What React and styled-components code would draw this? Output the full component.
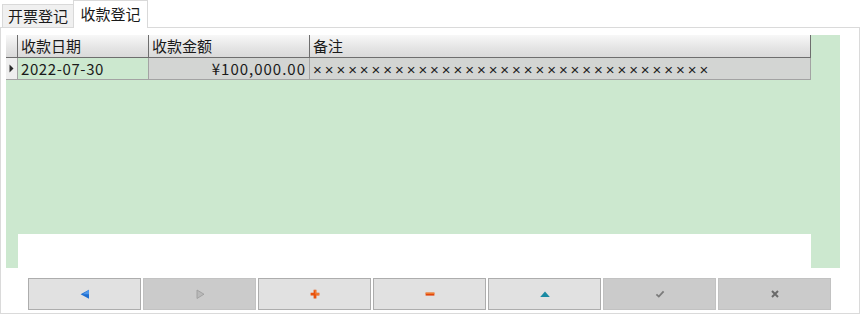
import React from 'react';
import styled, { createGlobalStyle } from 'styled-components';

const Global = createGlobalStyle`
  html, body { margin: 0; padding: 0; background: #ffffff; }
  body { font-family: "Noto Sans CJK SC", "Noto Sans", sans-serif; color: #1a1a1a; }
  * { box-sizing: border-box; }
`;

const Page = styled.div`
  width: 861px;
  height: 315px;
  display: flex;
  flex-direction: column;
  overflow: hidden;
`;

const TabStrip = styled.div`
  display: flex;
  align-items: flex-end;
  height: 27px;
  padding-left: 2px;
  position: relative;
  z-index: 1;
`;

const Tab = styled.div`
  display: flex;
  align-items: center;
  justify-content: center;
  width: ${p => (p.$active ? '75px' : '71px')};
  height: ${p => (p.$active ? '28px' : '23px')};
  margin-bottom: ${p => (p.$active ? '-1px' : '0')};
  padding-bottom: ${p => (p.$active ? '2px' : '0')};
  background: ${p => (p.$active ? '#ffffff' : '#f0f0f0')};
  border: 1px solid #d9d9d9;
  border-bottom: ${p => (p.$active ? 'none' : '0')};
  border-right: ${p => (p.$active ? '1px solid #d9d9d9' : '0')};
  font-size: 15px;
  line-height: 20px;
  color: #1a1a1a;
`;

const Panel = styled.div`
  width: 860px;
  height: 287px;
  border: 1px solid #dadada;
  padding: 7px 0 0 5px;
  display: flex;
  flex-direction: column;
`;

const Grid = styled.div`
  width: 834px;
  height: 233px;
  background: #cce8cf;
  display: flex;
  flex-direction: column;
`;

const GridRow = styled.div`
  display: flex;
  height: ${p => (p.$header ? '23px' : '22px')};
  width: 805px;
`;

const HeaderCell = styled.div`
  width: ${p => p.$w}px;
  height: 23px;
  background: linear-gradient(#f8f8f8, #e4e4e4 60%, #dadada);
  border-right: 1px solid #6e6e6e;
  border-bottom: 1px solid #6e6e6e;
  padding-left: 3px;
  font-size: 15px;
  line-height: 21px;
  white-space: nowrap;
  overflow: hidden;
`;

const Cell = styled.div`
  width: ${p => p.$w}px;
  height: 22px;
  background: ${p => p.$bg};
  border-right: 1px solid #a3a3a3;
  border-bottom: 1px solid #a3a3a3;
  padding: 0 3px;
  font-size: 15px;
  line-height: 21px;
  letter-spacing: ${p => p.$ls || 0}px;
  text-align: ${p => p.$align || 'left'};
  white-space: nowrap;
  overflow: hidden;
`;

const IndicatorCell = styled.div`
  width: 12px;
  height: 22px;
  background: #eeeeee;
  border-right: 1px solid #a3a3a3;
  border-bottom: 1px solid #a3a3a3;
  display: flex;
  align-items: center;
  justify-content: center;
`;

const Crosses = styled.span`
  font-family: "Liberation Sans", sans-serif;
  font-size: 15px;
  letter-spacing: 2.95px;
  color: #222;
`;

const Filler = styled.div`
  flex: 1;
`;

const BlankStrip = styled.div`
  margin-left: 12px;
  width: 793px;
  height: 34px;
  background: #ffffff;
`;

const ButtonBar = styled.div`
  display: flex;
  gap: 2px;
  margin: 10px 0 0 22px;
`;

const NavButton = styled.div`
  width: 113px;
  height: 32px;
  display: flex;
  align-items: center;
  justify-content: center;
  background: ${p => (p.$disabled ? '#cbcbcb' : '#e1e1e1')};
  border: 1px solid ${p => (p.$disabled ? '#c2c2c2' : '#adadad')};
`;

const Icon = ({ children }) => (
  <svg width="12" height="12" viewBox="0 0 12 12">{children}</svg>
);

const icons = [
  <Icon key="l"><polygon points="10,1.8 10,10.8 1.6,6.3" fill="#1f6fd1" /><polygon points="10,1.8 10,6.3 3.6,6.3" fill="#4f97ea" /></Icon>,
  <Icon key="r"><polygon points="3,2 3,10.5 10,6.2" fill="#b9b9b9" stroke="#9a9a9a" strokeWidth="0.8" /></Icon>,
  <Icon key="p"><path d="M4.6 1.8h2.8v3h3v2.8h-3v3H4.6v-3h-3V4.8h3z" fill="#e8520f" /><path d="M5.4 2.6h1.2v3h3V6.8h-3" fill="none" stroke="#f79a4a" strokeWidth="0.6" /></Icon>,
  <Icon key="m"><rect x="1.6" y="4.6" width="8.8" height="3" fill="#e2460d" /><rect x="1.6" y="4.6" width="8.8" height="1.1" fill="#f59442" /></Icon>,
  <Icon key="u"><polygon points="1.2,9 10.8,9 6,3.6" fill="#1a8aa3" /></Icon>,
  <Icon key="c"><path d="M2.4 6.4 L4.8 8.6 L9.6 3.4" fill="none" stroke="#7b7b7b" strokeWidth="1.8" /></Icon>,
  <Icon key="x"><path d="M3 3 L9 9 M9 3 L3 9" fill="none" stroke="#6a6a6a" strokeWidth="2" /></Icon>,
];
const disabled = [false, true, false, false, false, true, true];

export default function App() {
  return (
    <Page>
      <Global />
      <TabStrip>
        <Tab>开票登记</Tab>
        <Tab $active>收款登记</Tab>
      </TabStrip>
      <Panel>
        <Grid>
          <GridRow $header>
            <HeaderCell $w={12} />
            <HeaderCell $w={131}>收款日期</HeaderCell>
            <HeaderCell $w={161}>收款金额</HeaderCell>
            <HeaderCell $w={501}>备注</HeaderCell>
          </GridRow>
          <GridRow>
            <IndicatorCell>
              <svg width="5" height="9" viewBox="0 0 5 9"><polygon points="0.5,0.5 4.5,4.5 0.5,8.5" fill="#2a2a2a" /></svg>
            </IndicatorCell>
            <Cell $w={131} $bg="#cce8cf" $ls={0.6}>2022-07-30</Cell>
            <Cell $w={161} $bg="#d3d5d3" $align="right" $ls={1}>¥100,000.00</Cell>
            <Cell $w={501} $bg="#d3d5d3"><Crosses>{'×'.repeat(34)}</Crosses></Cell>
          </GridRow>
          <Filler />
          <BlankStrip />
        </Grid>
        <ButtonBar>
          {icons.map((ic, i) => (
            <NavButton key={i} $disabled={disabled[i]}>{ic}</NavButton>
          ))}
        </ButtonBar>
      </Panel>
    </Page>
  );
}
